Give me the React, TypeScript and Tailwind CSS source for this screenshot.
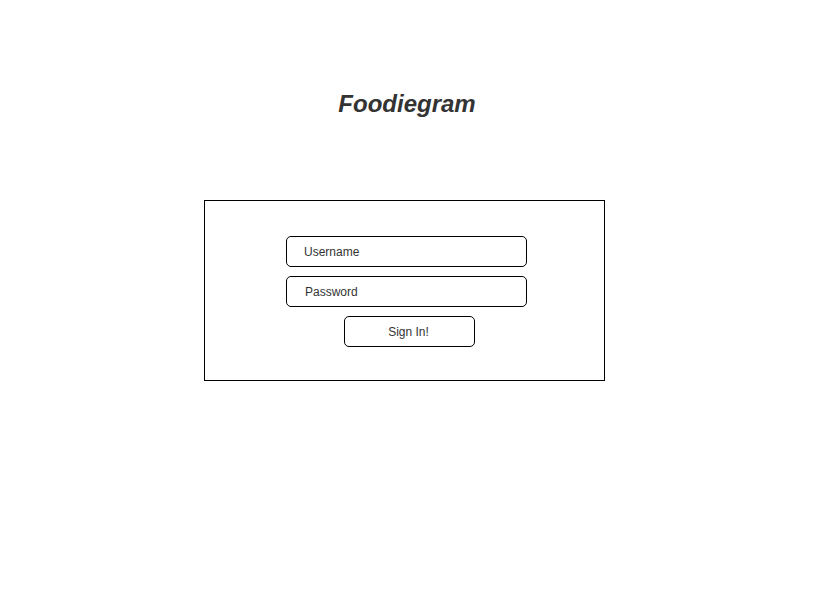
import React from "react";

function Field({ label, indent }: { label: string; indent: string }) {
    return (
        <div className={`w-[241px] h-[31px] border border-black rounded-[5px] flex items-center ${indent} text-[12px] text-[#333]`}>
            {label}
        </div>
    );
}

export default function App() {
    return (
        <div className="w-[822px] h-[594px] bg-white font-['Liberation_Sans',Arial,sans-serif]">
            <div className="pt-[90px] h-[200px]">
                <h1 className="text-[24px] leading-[28px] font-bold italic text-[#333] text-center pr-[8px]">Foodiegram</h1>
            </div>
            <div className="ml-[204px] w-[401px] h-[181px] border border-black pt-[35px] pl-[81px]">
                <div className="flex flex-col gap-[9px]">
                    <Field label="Username" indent="pl-[17px]" />
                    <Field label="Password" indent="pl-[18px]" />
                    <button className="ml-[58px] w-[131px] h-[31px] border border-black rounded-[5px] text-[12px] text-[#333] flex items-center justify-center pr-[2px]">
                        Sign In!
                    </button>
                </div>
            </div>
        </div>
    );
}
